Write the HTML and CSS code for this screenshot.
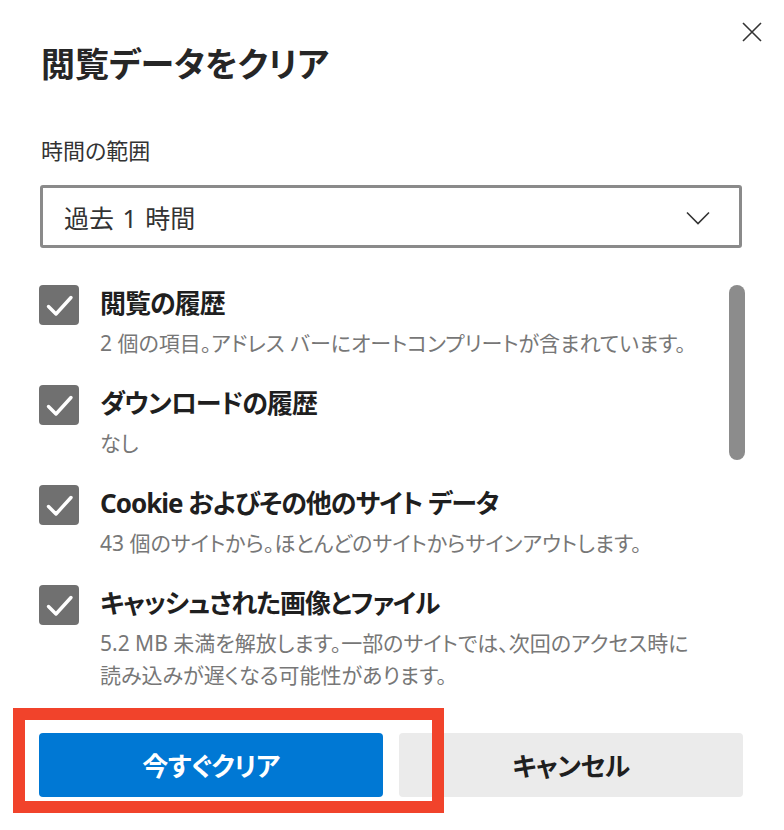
FILE: index.html
```html
<!DOCTYPE html>
<html lang="ja">
<head>
<meta charset="utf-8">
<title>閲覧データをクリア</title>
<link rel="stylesheet" href="styles.css">
</head>
<body>
<div class="dialog">
  <button class="close" aria-label="閉じる">
    <svg width="20" height="20" viewBox="0 0 20 20"><path d="M1 1 L19 19 M19 1 L1 19" stroke="#333" stroke-width="1.6" fill="none"/></svg>
  </button>
  <h1 class="title">閲覧データをクリア</h1>
  <div class="field-label">時間の範囲</div>
  <div class="select">
    <span class="select-value">過去 1 時間</span>
    <svg class="chevron" width="24" height="14" viewBox="0 0 24 14"><path d="M1 1.5 L12 12.5 L23 1.5" stroke="#333" stroke-width="1.6" fill="none"/></svg>
  </div>
  <div class="list-wrap">
    <ul class="options">
      <li class="option">
        <span class="checkbox"><svg width="40" height="40" viewBox="0 0 40 40"><path d="M9.5 21.5 L17 29 L32 12.5" stroke="#fff" stroke-width="3.4" fill="none" stroke-linecap="round" stroke-linejoin="round"/></svg></span>
        <div class="option-text">
          <div class="option-title">閲覧の履歴</div>
          <div class="option-desc">2 個の項目。アドレス バーにオートコンプリートが含まれています。</div>
        </div>
      </li>
      <li class="option">
        <span class="checkbox"><svg width="40" height="40" viewBox="0 0 40 40"><path d="M9.5 21.5 L17 29 L32 12.5" stroke="#fff" stroke-width="3.4" fill="none" stroke-linecap="round" stroke-linejoin="round"/></svg></span>
        <div class="option-text">
          <div class="option-title">ダウンロードの履歴</div>
          <div class="option-desc">なし</div>
        </div>
      </li>
      <li class="option">
        <span class="checkbox"><svg width="40" height="40" viewBox="0 0 40 40"><path d="M9.5 21.5 L17 29 L32 12.5" stroke="#fff" stroke-width="3.4" fill="none" stroke-linecap="round" stroke-linejoin="round"/></svg></span>
        <div class="option-text">
          <div class="option-title">Cookie およびその他のサイト データ</div>
          <div class="option-desc">43 個のサイトから。ほとんどのサイトからサインアウトします。</div>
        </div>
      </li>
      <li class="option">
        <span class="checkbox"><svg width="40" height="40" viewBox="0 0 40 40"><path d="M9.5 21.5 L17 29 L32 12.5" stroke="#fff" stroke-width="3.4" fill="none" stroke-linecap="round" stroke-linejoin="round"/></svg></span>
        <div class="option-text">
          <div class="option-title">キャッシュされた画像とファイル</div>
          <div class="option-desc">5.2 MB 未満を解放します。一部のサイトでは、次回のアクセス時に<br>読み込みが遅くなる可能性があります。</div>
        </div>
      </li>
    </ul>
    <div class="scrollbar"></div>
  </div>
  <div class="actions">
    <button class="btn btn-primary">今すぐクリア</button>
    <button class="btn btn-secondary">キャンセル</button>
  </div>
  <div class="highlight"></div>
</div>
</body>
</html>
```

FILE: styles.css
```css
* { box-sizing: border-box; }
html, body {
  margin: 0;
  padding: 0;
  background: #fff;
}
body {
  font-family: "Noto Sans", "Noto Sans CJK JP", sans-serif;
  font-feature-settings: "palt" 1;
  color: #1f1f1f;
}
.dialog {
  position: relative;
  width: 784px;
  height: 830px;
  padding: 42px 41px 0 39px;
}
.close {
  position: absolute;
  top: 22px;
  right: 22px;
  width: 20px;
  height: 20px;
  padding: 0;
  border: 0;
  background: none;
  display: flex;
}
.title {
  margin: 0;
  font-size: 34px;
  line-height: 44px;
  font-weight: 700;
  color: #262626;
  padding-left: 2px;
}
.field-label {
  margin-top: 50px;
  font-size: 22px;
  line-height: 28px;
  color: #333;
  padding-left: 2px;
}
.select {
  margin: 21px 1px 0 1px;
  height: 63px;
  border: 3px solid #8a8a8a;
  border-radius: 3px;
  display: flex;
  align-items: center;
  justify-content: space-between;
  padding: 0 29px 0 21px;
}
.select-value {
  font-size: 25px;
  word-spacing: 2px;
  color: #333;
}
.chevron { display: block; margin-top: 2px; }
.list-wrap {
  margin-top: 37px;
  display: flex;
  justify-content: space-between;
  align-items: flex-start;
}
.options {
  list-style: none;
  margin: 0;
  padding: 0;
  display: flex;
  flex-direction: column;
  gap: 26px;
}
.option {
  display: flex;
  gap: 21px;
  align-items: flex-start;
}
.checkbox {
  flex: none;
  width: 40px;
  height: 40px;
  border-radius: 4px;
  background: #707070;
  display: flex;
}
.option-title {
  font-size: 26px;
  line-height: 36px;
  font-weight: 700;
  letter-spacing: -1px;
  color: #1f1f1f;
}
.option-desc {
  margin-top: 6px;
  font-size: 21px;
  line-height: 32px;
  color: #777;
}
.scrollbar {
  flex: none;
  width: 16px;
  height: 175px;
  border-radius: 8px;
  background: #8c8c8c;
  margin-right: -2px;
}
.actions {
  margin-top: 42px;
  display: flex;
  gap: 16px;
}
.btn {
  flex: 1;
  height: 64px;
  border: 0;
  border-radius: 4px;
  font-family: inherit;
  font-feature-settings: "palt" 1;
  font-size: 26px;
  font-weight: 700;
  letter-spacing: -0.5px;
}
.btn-primary {
  background: #0078d4;
  color: #fff;
}
.btn-secondary {
  background: #ebebeb;
  color: #1f1f1f;
}
.highlight {
  position: absolute;
  left: 13px;
  top: 708px;
  width: 431px;
  height: 105px;
  border: 12px solid #f1432b;
  pointer-events: none;
}
```
